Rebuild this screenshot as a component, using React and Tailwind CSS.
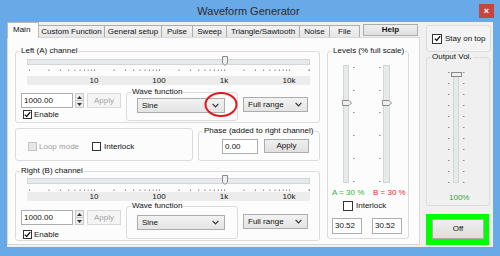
import React from "react";

const hTicks = (() => {
  const a = [];
  for (let k = 0; k < 5; k++)
    for (let n = 1; n < 10; n++) {
      const f = n * 10 ** k;
      if (f > 20000) continue;
      a.push(2 + 65 * Math.log10(f));
    }
  a.push(282);
  return a;
})();

function Check({ checked, disabled, big }) {
  return (
    <span
      className={`${big ? "w-[10px] h-[10px]" : "w-[9px] h-[9px]"} shrink-0 flex items-center justify-center border ${
        disabled ? "border-[#c4c4c4] bg-[#e6e6e6]" : "border-[#333333] bg-white"
      }`}
    >
      {checked && (
        <svg width="7" height="7" viewBox="0 0 7 7">
          <path d="M0.8 3.6 L2.7 5.5 L6.2 1.2" fill="none" stroke="#111" strokeWidth="1.3" />
        </svg>
      )}
    </span>
  );
}

function Group({ label, className, labelBg, children }) {
  return (
    <div className={`border border-[#dcdcdc] rounded-[3px] ${className}`}>
      {label && (
        <div className={`-mt-[6px] ml-[4px] px-[1px] w-fit h-[10px] leading-[10px] whitespace-nowrap ${labelBg || "bg-[#fcfcfc]"}`}>
          {label}
        </div>
      )}
      {children}
    </div>
  );
}

function Select({ text, className }) {
  return (
    <div
      className={`flex items-center justify-between pl-[4px] pr-[5px] border border-[#acacac] bg-linear-to-b from-[#f2f2f2] to-[#e4e4e4] ${className}`}
    >
      <span>{text}</span>
      <svg width="7" height="5" viewBox="0 0 7 5">
        <path d="M0.6 0.8 L3.5 3.8 L6.4 0.8" fill="none" stroke="#333" strokeWidth="1.2" />
      </svg>
    </div>
  );
}

function TextBox({ text, className }) {
  return (
    <div className={`flex items-center pl-[2px] border border-[#abadb3] bg-white ${className}`}>{text}</div>
  );
}

function Spinner() {
  return (
    <div className="ml-[2px] w-[9px] h-[15px] flex flex-col border border-[#c9c9c9] bg-[#ececec]">
      <div className="flex-1 flex items-center justify-center border-b border-[#c9c9c9]">
        <svg width="5" height="3" viewBox="0 0 5 3">
          <path d="M0 3 L2.5 0 L5 3 Z" fill="#333" />
        </svg>
      </div>
      <div className="flex-1 flex items-center justify-center">
        <svg width="5" height="3" viewBox="0 0 5 3">
          <path d="M0 0 L2.5 3 L5 0 Z" fill="#333" />
        </svg>
      </div>
    </div>
  );
}

function Channel({ label, compact }) {
  return (
    <Group label={label} className={compact ? "w-[305px] h-[70px]" : "w-[305px] h-[72px]"}>
      <div className="ml-[11px] w-[283px]">
        <div className={`relative h-[11px] ${compact ? "pt-[2px]" : "pt-[3px]"}`}>
          <div className="h-[6px] bg-[#e7eaea] border border-[#d3d6d6]" />
          <svg
            className={`absolute left-[195px] ${compact ? "-top-[1px]" : "top-0"}`}
            width="6"
            height="10"
            viewBox="0 0 6 10"
          >
            <path d="M0.5 0.5 H5.5 V7 L3 9.5 L0.5 7 Z" fill="#efefef" stroke="#8a8a8a" />
          </svg>
        </div>
        <svg width="283" height="5" viewBox="0 0 283 5" className="block">
          {hTicks.map((x, i) => (
            <rect key={i} x={x} y="2.5" width="1" height="1.5" fill="#8a8a8a" />
          ))}
        </svg>
        <div className={`${compact ? "mt-0" : "mt-[4px]"} h-[9px] leading-[9px] bg-[#ececec] flex`}>
          <span className="ml-[52px] w-[30px] text-center">10</span>
          <span className="ml-[35px] w-[30px] text-center">100</span>
          <span className="ml-[35px] w-[30px] text-center">1k</span>
          <span className="ml-[35px] w-[30px] text-center">10k</span>
        </div>
      </div>
      <div className={`${compact ? "mt-[9px]" : "mt-[8px]"} ml-[5px] flex items-start`}>
        <div className="w-[100px]">
          <div className="flex">
            <TextBox text="1000.00" className="w-[52px] h-[15px]" />
            <Spinner />
            <div className="ml-[3px] w-[34px] h-[15px] flex items-center justify-center border border-[#d9d9d9] bg-[#f4f4f4] text-[#a6a6a6]">
              Apply
            </div>
          </div>
          <div className={`${compact ? "mt-[5px]" : "mt-[2px]"} flex items-center h-[9px]`}>
            <span className="ml-[2px]">
              <Check checked />
            </span>
            <span className="ml-[2px]">Enable</span>
          </div>
        </div>
        <Group
          label="Wave function"
          className={compact ? "-mt-[4px] ml-[5px] w-[112px] h-[33px]" : "-mt-[1px] ml-[5px] w-[112px] h-[29px]"}
        >
          <Select text="Sine" className={`ml-[10px] ${compact ? "mt-[4px]" : "mt-[1px]"} w-[88px] h-[15px]`} />
        </Group>
        <Select text="Full range" className="ml-[5px] mt-[4px] w-[65px] h-[15px]" />
      </div>
    </Group>
  );
}

function VTicks({ ys, h }) {
  return (
    <svg width="2" height={h} viewBox={`0 0 2 ${h}`} className="block">
      {ys.map((y, i) => (
        <rect key={i} x="0" y={y} width="1.5" height="1" fill="#8a8a8a" />
      ))}
    </svg>
  );
}

function VThumb() {
  return (
    <svg width="10" height="6" viewBox="0 0 10 6">
      <path d="M0.5 0.5 H7 L9.5 3 L7 5.5 H0.5 Z" fill="#efefef" stroke="#8a8a8a" />
    </svg>
  );
}

export default function App() {
  const lvTicks = [2, 25, 47, 70, 93, 116];
  const ovTicks = [0, 11, 22, 33, 44, 55, 66, 77, 88, 99, 110];
  const tabs = [
    ["Custom Function", "w-[66px]"],
    ["General setup", "w-[57px]"],
    ["Pulse", "w-[31px]"],
    ["Sweep", "w-[34px]"],
    ["Triangle/Sawtooth", "w-[73px]"],
    ["Noise", "w-[30px]"],
    ["File", "w-[30px]"],
  ];
  return (
    <div className="relative w-[500px] h-[256px] overflow-hidden bg-[#6aa9e7] flex flex-col font-['Liberation_Sans',Arial,sans-serif] text-[8px] leading-none text-[#111]">
      {/* title bar */}
      <div className="h-[22px] flex items-start shrink-0">
        <div className="w-[18px]" />
        <div className="flex-1 text-center text-[11px] leading-[14px] pt-[4px] text-[#2b2b2b]">Waveform Generator</div>
        <div className="mt-[4px] mr-[6px] w-[15px] h-[14px] bg-[#c8453f] flex items-center justify-center text-white text-[9px] font-bold">
          ×
        </div>
      </div>
      {/* client */}
      <div className="mx-[7px] w-[486px] h-[225px] bg-[#f0f0f0] flex items-start shrink-0">
        {/* tabs column */}
        <div className="w-[413px] flex flex-col">
          <div className="h-[15px] flex items-end">
            <div className="relative z-10 -mb-[1px] w-[32px] h-[16px] bg-[#fcfcfc] border border-b-0 border-[#b9b9b9] pl-[5px] pt-[3px]">
              Main
            </div>
            {tabs.map(([t, w]) => (
              <div
                key={t}
                className={`${w} h-[12px] border-t border-r border-[#acacac] bg-linear-to-b from-[#f2f2f2] to-[#e6e6e6] flex items-center justify-center whitespace-nowrap`}
              >
                {t}
              </div>
            ))}
            <div className="ml-[3px] mb-[1px] w-[55px] h-[12px] border border-[#acacac] bg-linear-to-b from-[#efefef] to-[#e0e0e0] flex items-center justify-center font-bold">
              Help
            </div>
          </div>
          <div className="h-[208px] bg-[#fcfcfc] border border-[#d9d9d9] flex items-start pl-[7px] pt-[13px]">
            {/* left column */}
            <div className="w-[305px] flex flex-col">
              <Channel label="Left (A) channel" />
              <div className="flex items-start mt-[5px]">
                <Group className="w-[178px] h-[33px] flex items-center pt-[4px]">
                  <span className="ml-[12px]">
                    <Check disabled />
                  </span>
                  <span className="ml-[2px] text-[#9d9d9d]">Loop mode</span>
                  <span className="ml-[13px]">
                    <Check />
                  </span>
                  <span className="ml-[3px]">Interlock</span>
                </Group>
                <Group label="Phase (added to right channel)" className="ml-[5px] mt-[3px] w-[122px] h-[30px]">
                  <div className="mt-[3px] flex">
                    <TextBox text="0.00" className="ml-[23px] w-[36px] h-[15px]" />
                    <div className="ml-[6px] w-[45px] h-[14px] border border-[#adadad] bg-linear-to-b from-[#efefef] to-[#e0e0e0] flex items-center justify-center">
                      Apply
                    </div>
                  </div>
                </Group>
              </div>
              <div className="mt-[10px]">
                <Channel label="Right (B) channel" compact />
              </div>
            </div>
            {/* levels */}
            <Group label="Levels (% full scale)" className="ml-[7px] w-[82px] h-[188px]">
              <div className="mt-[9px] h-[118px] flex">
                <div className="ml-[15px] relative w-[6px] h-full bg-[#e7eaea] border border-[#d3d6d6]">
                  <div className="absolute -left-[2px] top-[34px]">
                    <VThumb />
                  </div>
                </div>
                <div className="ml-[4px]">
                  <VTicks ys={lvTicks} h={118} />
                </div>
                <div className="ml-[24px]">
                  <VTicks ys={lvTicks} h={118} />
                </div>
                <div className="ml-[2px] relative w-[7px] h-full bg-[#e7eaea] border border-[#d3d6d6]">
                  <div className="absolute -left-[2px] top-[34px]">
                    <VThumb />
                  </div>
                </div>
              </div>
              <div className="mt-[5px] h-[10px] leading-[10px] flex">
                <span className="ml-[4px] w-[41px] text-[#2fb83a]">A = 30 %</span>
                <span className="text-[#e8262c]">B = 30 %</span>
              </div>
              <div className="mt-[3px] h-[10px] flex items-center">
                <span className="ml-[15px]">
                  <Check big />
                </span>
                <span className="ml-[3px]">Interlock</span>
              </div>
              <div className="mt-[7px] flex">
                <TextBox text="30.52" className="ml-[4px] w-[30px] h-[16px]" />
                <TextBox text="30.52" className="ml-[10px] w-[30px] h-[16px]" />
              </div>
            </Group>
          </div>
        </div>
        {/* right column */}
        <div className="ml-[6px] w-[65px] flex flex-col">
          <div className="mt-[3px] h-[27px] border border-[#dcdcdc] rounded-[3px] bg-[#f3f3f3] flex items-center pl-[5px]">
            <Check checked big />
            <span className="ml-[3px] whitespace-nowrap">Stay on top</span>
          </div>
          <Group label="Output Vol." labelBg="bg-[#f0f0f0]" className="mt-[5px] w-[64px] h-[149px]">
            <div className="mt-[10px] h-[111px] flex">
              <div className="ml-[21px]">
                <VTicks ys={ovTicks} h={111} />
              </div>
              <div className="ml-[3px] relative w-[6px] h-full bg-[#e7eaea] border border-[#d3d6d6]">
                <div className="absolute -left-[3px] -top-[1px] w-[11px] h-[5px] bg-[#efefef] border border-[#8a8a8a]" />
              </div>
              <div className="ml-[4px]">
                <VTicks ys={ovTicks} h={111} />
              </div>
            </div>
            <div className="mt-[10px] ml-[22px] text-[#2fa83a] leading-[10px]">100%</div>
          </Group>
          <div className="mt-[8px] w-[63px] h-[31px] bg-[#00ff00] pl-[6px] pt-[5px]">
            <div className="w-[52px] h-[20px] border border-[#adadad] bg-linear-to-b from-[#efefef] to-[#dedede] flex items-center justify-center">
              Off
            </div>
          </div>
        </div>
      </div>
      {/* annotation circle */}
      <svg className="absolute left-[204px] top-[91px]" width="34" height="27" viewBox="0 0 34 27">
        <ellipse cx="17" cy="13.5" rx="15.5" ry="11.5" fill="none" stroke="#e3141b" strokeWidth="2" />
      </svg>
    </div>
  );
}
